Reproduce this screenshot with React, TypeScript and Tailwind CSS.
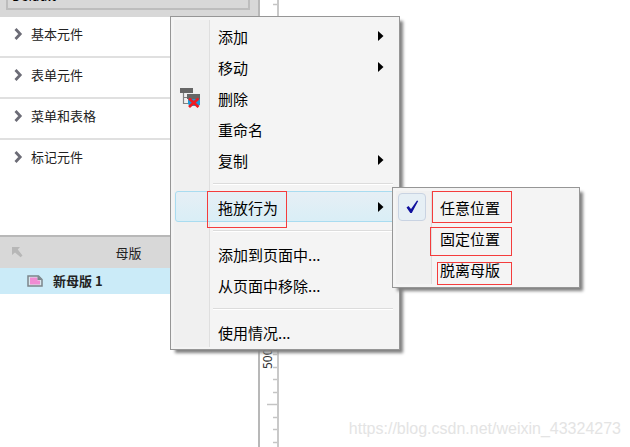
import React from "react";

const SECTIONS = ["基本元件", "表单元件", "菜单和表格", "标记元件"];

type Entry =
  | { kind: "separator" }
  | { kind: "item"; label: string; submenu?: boolean; icon?: boolean; active?: boolean };

const MENU: Entry[] = [
  { kind: "item", label: "添加", submenu: true },
  { kind: "item", label: "移动", submenu: true },
  { kind: "item", label: "删除", icon: true },
  { kind: "item", label: "重命名" },
  { kind: "item", label: "复制", submenu: true },
  { kind: "separator" },
  { kind: "item", label: "拖放行为", submenu: true, active: true },
  { kind: "separator" },
  { kind: "item", label: "添加到页面中..." },
  { kind: "item", label: "从页面中移除..." },
  { kind: "separator" },
  { kind: "item", label: "使用情况..." },
];

const TICKS = Array.from({ length: 80 }, (_, i) => i);

function Chevron() {
  return (
    <svg width="9" height="12" viewBox="0 0 9 12" className="shrink-0" aria-hidden="true">
      <path d="M1.5 1 L6.2 6 L1.5 11" fill="none" stroke="#6c6c76" strokeWidth="2.8" />
    </svg>
  );
}

function DeleteIcon() {
  return (
    <svg width="20" height="20" viewBox="0 0 20 20" aria-hidden="true">
      <rect x="0" y="0" width="13" height="5" fill="#666666" />
      <path d="M3.5 5 V15.5 H9 M3.5 9.5 H9" fill="none" stroke="#808080" strokeWidth="1.2" />
      <rect x="7" y="6" width="13" height="5" fill="#666666" />
      <path d="M8 11 H20 V17 L18 18 H10 L8 16 Z" fill="#1c9ad6" />
      <path d="M9 10.5 L18.5 19 M18.5 10.5 L9 19" stroke="#ee1c22" strokeWidth="2.8" fill="none" />
    </svg>
  );
}

function MasterIcon() {
  return (
    <svg width="16" height="12" viewBox="0 0 16 12" className="shrink-0" aria-hidden="true">
      <path d="M1 1 H11.5 L15 4.5 V11 H1 Z" fill="#d9e6ec" stroke="#7c858b" strokeWidth="1.5" />
      <path d="M3 2.5 H10.5 V5.5 H13 V9.5 H3 Z" fill="#f08bd3" />
      <path d="M10.5 1 V5 H15 Z" fill="#7c858b" />
    </svg>
  );
}

function Ruler() {
  return (
    <div className="w-[19px] shrink-0 border-r-2 border-[#c9c9c9] bg-white">
      <svg className="block h-full w-full" aria-hidden="true">
        {TICKS.map((i) => (
          <line
            key={i}
            x1={i % 10 === 2 ? 7 : 13}
            x2={17}
            y1={4.5 + Math.round(i * 12.5)}
            y2={4.5 + Math.round(i * 12.5)}
            stroke="#c4c4c4"
            strokeWidth={1.5}
          />
        ))}
        <text
          transform="translate(12 369) rotate(-90)"
          fontSize="12"
          fontFamily="Noto Sans, sans-serif"
          fill="#333333"
        >
          500
        </text>
      </svg>
    </div>
  );
}

function SidePanel() {
  return (
    <aside className="flex w-[260px] shrink-0 flex-col border-r-2 border-[#b8b8b8] bg-white text-[13px] text-[#222222]">
      <div className="flex h-[17px] shrink-0 flex-col justify-end overflow-hidden bg-[#d8d8d8] pr-2 pb-[7px] pl-[6px]">
        <select
          aria-label="元件库"
          className="h-7 w-full shrink-0 appearance-none border-2 border-[#bdbdbd] bg-[#d8d8d8] pl-1 text-[13px] text-black"
        >
          <option>Default</option>
        </select>
      </div>
      <nav className="flex h-[218px] shrink-0 flex-col">
        {SECTIONS.map((name) => (
          <button
            key={name}
            type="button"
            className="flex h-[41px] w-full items-center gap-2 border-b-2 border-[#e0e0e0] pb-[5px] pl-[14px] text-left last:border-white"
          >
            <Chevron />
            <span>{name}</span>
          </button>
        ))}
      </nav>
      <section className="flex flex-col">
        <h2 className="flex h-[33px] items-center border-t-2 border-[#b8b8b8] bg-[#d8d8d8] pl-3">
          <svg width="11" height="11" viewBox="0 0 11 11" className="shrink-0" aria-hidden="true">
            <path d="M0 0 H8 L5.8 2.4 L10.5 8.4 L8.6 10.3 L3 5.4 L0 8 Z" fill="#b7b7b7" />
          </svg>
          <span className="flex-1 pr-6 text-center">母版</span>
        </h2>
        <button
          type="button"
          className="flex h-[26px] w-full items-center gap-[10px] bg-[#cbebf8] pl-[27px] text-left font-bold"
        >
          <MasterIcon />
          <span>新母版 1</span>
        </button>
      </section>
    </aside>
  );
}

function ContextMenu() {
  return (
    <div
      role="menu"
      className="absolute top-4 left-[170px] w-[230px] border border-[#969696] bg-[#f4f4f4] pt-[3px] pb-[2px] text-[15px] text-black shadow-[4px_4px_3px_-1px_#808080]"
    >
      <div className="bg-[linear-gradient(to_right,#f4f4f4_3px,#f0f0f0_3px,#f0f0f0_38px,#dfdfdf_38px,#dfdfdf_39px,transparent_39px)]">
        {MENU.map((entry, i) =>
          entry.kind === "separator" ? (
            <div key={i} role="separator" className="h-4 pt-2 pr-[6px] pl-[42px]">
              <div className="h-[2px] border-b border-white bg-[#dcdcdc]" />
            </div>
          ) : (
            <button key={i} type="button" role="menuitem" className="flex h-[31px] w-full pl-1 text-left">
              <span
                className={
                  "flex h-full w-full items-center rounded-[3px] border " +
                  (entry.active ? "border-[#a9dcf0] bg-[linear-gradient(#e6eff5,#d9eef6)]" : "border-transparent")
                }
              >
                <span className="flex w-[42px] shrink-0 pl-1">{entry.icon && <DeleteIcon />}</span>
                <span className="flex-1 pt-[3px] leading-5">{entry.label}</span>
                {entry.submenu && (
                  <svg width="6" height="10" viewBox="0 0 6 10" className="mr-[14px]" aria-hidden="true">
                    <path d="M0 0 L5.5 5 L0 10 Z" fill="#000000" />
                  </svg>
                )}
              </span>
            </button>
          ),
        )}
      </div>
    </div>
  );
}

function SubMenu() {
  return (
    <div
      role="menu"
      className="absolute top-[187px] left-[392px] w-[188px] border border-[#969696] bg-[#f4f4f4] py-[3px] text-[15px] text-black shadow-[4px_4px_3px_-1px_#808080]"
    >
      <div className="bg-[linear-gradient(to_right,#f4f4f4_3px,#f0f0f0_3px,#f0f0f0_38px,#dfdfdf_38px,#dfdfdf_39px,transparent_39px)]">
        {["任意位置", "固定位置", "脱离母版"].map((label, i) => (
          <button
            key={label}
            type="button"
            role="menuitemradio"
            aria-checked={i === 0}
            className="flex h-[31px] w-full items-center pl-[5px] text-left"
          >
            <span className="flex w-[42px] shrink-0">
              {i === 0 && (
                <span className="flex h-7 w-7 items-center justify-center rounded-[4px] border border-[#c9d3e2] bg-[#e6eff5]">
                  <svg width="13" height="14" viewBox="0 0 13 14" aria-hidden="true">
                    <path d="M0.5 7.5 L2.5 6 L5 9 L11 0.5 L12.2 1 L5.8 13 H4.3 Z" fill="#11119e" />
                  </svg>
                </span>
              )}
            </span>
            <span className="pt-[3px] leading-5">{label}</span>
          </button>
        ))}
      </div>
    </div>
  );
}

/* Red annotation frames laid over the menus. */
function Callouts() {
  return (
    <div className="pointer-events-none" aria-hidden="true">
      <div className="absolute top-[191px] left-[207px] h-[37px] w-20 border border-[#f43c3c]" />
      <div className="absolute top-[191px] left-[432px] h-8 w-20 border border-[#f43c3c]" />
      <div className="absolute top-[227px] left-[430px] h-[29px] w-[82px] border border-[#f43c3c]" />
      <div className="absolute top-[262px] left-[437px] h-[23px] w-[75px] border border-[#f43c3c]" />
    </div>
  );
}

export default function App() {
  return (
    <div className="relative flex h-screen w-full overflow-hidden bg-white font-['Noto_Sans_CJK_SC',sans-serif]">
      <SidePanel />
      <Ruler />
      <main className="flex flex-1 items-end justify-end bg-white pr-[9px] pb-2">
        <span className="font-['Liberation_Sans',sans-serif] text-base leading-5 text-[#e4e4e4]">
          https://blog.csdn.net/weixin_43324273
        </span>
      </main>
      <ContextMenu />
      <SubMenu />
      <Callouts />
    </div>
  );
}
